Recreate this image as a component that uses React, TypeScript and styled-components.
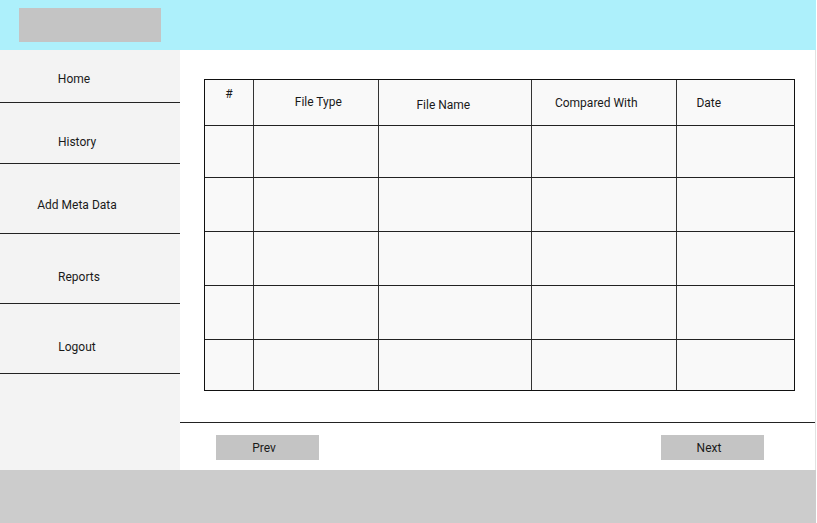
import * as React from 'react';
import styled, { createGlobalStyle } from 'styled-components';

const GlobalStyle = createGlobalStyle`
    html, body {
        margin: 0;
        padding: 0;
        background: #fff;
    }

    body {
        font-family: Roboto, "Liberation Sans", sans-serif;
        font-size: 12px;
        color: #1a1a1a;
    }
`;

interface NavItemProps {
    height: number;
    offset: number;
    shift: number;
}

interface CellProps {
    width: number;
    indent?: number;
    top?: number;
}

const Page = styled.div`
    display: grid;
    grid-template-rows: 50px 420px 53px;
    width: 816px;
    height: 523px;
`;

const Header = styled.header`
    display: flex;
    align-items: center;
    padding-left: 19px;
    background: #adf0fb;
`;

const Logo = styled.div`
    width: 142px;
    height: 34px;
    background: #c4c4c4;
`;

const Body = styled.div`
    display: flex;
`;

const Sidebar = styled.nav`
    display: flex;
    flex-direction: column;
    width: 180px;
    background: #f3f3f3;
`;

const NavItem = styled.div`
    display: flex;
    justify-content: center;
    box-sizing: border-box;
    height: ${(props: NavItemProps) => props.height}px;
    padding-top: ${(props: NavItemProps) => props.offset}px;
    padding-right: ${(props: NavItemProps) => 26 - props.shift * 2}px;
    border-bottom: 1px solid #222;
    line-height: 14px;
`;

const Main = styled.main`
    display: flex;
    flex-direction: column;
    flex: 1;
    padding-top: 29px;
    border-right: 1px solid #e2e2e2;
`;

const TableWrap = styled.div`
    padding-left: 24px;
`;

const Table = styled.div`
    display: flex;
    flex-direction: column;
    width: 591px;
    border: 1px solid #111;
    box-sizing: border-box;
    background: #f9f9f9;
`;

const Row = styled.div`
    display: flex;
    box-sizing: border-box;
    height: ${(props: { height: number }) => props.height}px;
    border-top: 1px solid #222;

    &:first-child {
        border-top: none;
    }
`;

const Cell = styled.div`
    box-sizing: border-box;
    width: ${(props: CellProps) => props.width}px;
    padding-left: ${(props: CellProps) => props.indent || 0}px;
    padding-top: ${(props: CellProps) => props.top || 0}px;
    border-left: 1px solid #333;
    line-height: 14px;

    &:first-child {
        border-left: none;
        text-align: center;
    }
`;

const Divider = styled.div`
    margin-top: 31px;
    border-top: 1px solid #222;
`;

const Pager = styled.div`
    display: flex;
    justify-content: space-between;
    padding: 12px 51px 0 36px;
`;

const PageButton = styled.button`
    width: 103px;
    height: 25px;
    border: none;
    background: #c4c4c4;
    font-family: Roboto, "Liberation Sans", sans-serif;
    font-size: 12px;
    color: #1a1a1a;
    padding: 1px 7px 0 0;
    cursor: pointer;
`;

const Footer = styled.footer`
    background: #cccccc;
`;

const navItems = [
    { label: 'Home', height: 53, offset: 22, shift: -3 },
    { label: 'History', height: 61, offset: 32, shift: 0 },
    { label: 'Add Meta Data', height: 70, offset: 34, shift: 0 },
    { label: 'Reports', height: 70, offset: 36, shift: 2 },
    { label: 'Logout', height: 70, offset: 36, shift: 0 }
];

const columns = [
    { label: '#', width: 48, indent: 0, top: 7 },
    { label: 'File Type', width: 126, indent: 41, top: 15 },
    { label: 'File Name', width: 153, indent: 37, top: 18 },
    { label: 'Compared With', width: 146, indent: 23, top: 16 },
    { label: 'Date', width: 118, indent: 19, top: 16 }
];

const rowHeights = [52, 54, 54, 54, 51];

export default function App() {
    return (
        <Page>
            <GlobalStyle />
            <Header>
                <Logo />
            </Header>
            <Body>
                <Sidebar>
                    {navItems.map(item => (
                        <NavItem
                            key={item.label}
                            height={item.height}
                            offset={item.offset}
                            shift={item.shift}
                        >
                            {item.label}
                        </NavItem>
                    ))}
                </Sidebar>
                <Main>
                    <TableWrap>
                        <Table>
                            <Row height={45}>
                                {columns.map(col => (
                                    <Cell
                                        key={col.label}
                                        width={col.width}
                                        indent={col.indent}
                                        top={col.top}
                                    >
                                        {col.label}
                                    </Cell>
                                ))}
                            </Row>
                            {rowHeights.map((h, i) => (
                                <Row key={i} height={h}>
                                    {columns.map(col => (
                                        <Cell key={col.label} width={col.width} />
                                    ))}
                                </Row>
                            ))}
                        </Table>
                    </TableWrap>
                    <Divider />
                    <Pager>
                        <PageButton>Prev</PageButton>
                        <PageButton>Next</PageButton>
                    </Pager>
                </Main>
            </Body>
            <Footer />
        </Page>
    );
}
